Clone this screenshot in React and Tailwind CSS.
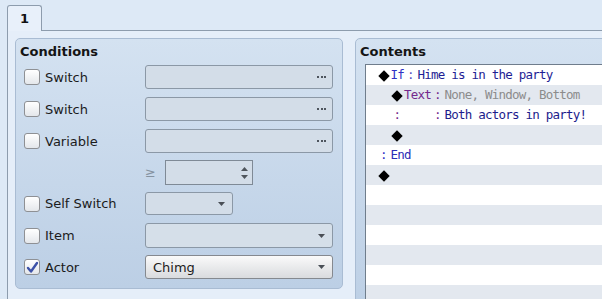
import React from "react";

const sans = { fontFamily: '"DejaVu Sans", Verdana, sans-serif' };
const mono = { fontFamily: '"DejaVu Sans Mono", "Liberation Mono", monospace' };

function Check({ checked }) {
  return (
    <div className="w-4 h-4 rounded-[3px] border border-[#8e9094] bg-gradient-to-b from-[#ffffff] to-[#e4e7eb] flex items-center justify-center shrink-0">
      {checked && (
        <svg width="13" height="13" viewBox="0 0 13 13">
          <path d="M2 7 L5 10.5 L11 2" fill="none" stroke="#3d52a8" strokeWidth="2.4" strokeLinecap="round" strokeLinejoin="round" />
        </svg>
      )}
    </div>
  );
}

function Dots() {
  return (
    <div className="flex gap-[1.5px] mr-[6px]">
      <div className="w-[2px] h-[2px] bg-[#4e555e]" />
      <div className="w-[2px] h-[2px] bg-[#4e555e]" />
      <div className="w-[2px] h-[2px] bg-[#4e555e]" />
    </div>
  );
}

function Arrow() {
  return (
    <svg width="7" height="4" viewBox="0 0 7 4" className="mr-[7px]">
      <polygon points="0,0 7,0 3.5,4" fill="#4a4f56" />
    </svg>
  );
}

function Row({ label, checked, className, children }) {
  return (
    <div className={`flex items-center ${className}`}>
      <div className="w-[129px] pl-[8px] flex items-center gap-[5px]">
        {label && <Check checked={checked} />}
        {label && <span className="text-[13px] text-[#1b1b1b] pt-[1px]">{label}</span>}
      </div>
      {children}
    </div>
  );
}

function Diamond() {
  return (
    <span className="inline-flex w-[13.5px] h-[20px] items-center justify-center">
      <svg width="12" height="12" viewBox="0 0 12 12">
        <polygon points="6,0.3 11.7,6 6,11.7 0.3,6" fill="#000" />
      </svg>
    </span>
  );
}

function FW({ children, className }) {
  return <span className={`inline-block w-[13.5px] text-center tracking-normal ${className}`}>{children}</span>;
}

export default function App() {
  const rows = [
    <>
      <Diamond />
      <span className="text-[#3030c4]">If</span>
      <FW className="text-[#5a4fc0]">:</FW>
      <span className="text-[#1e1e94]">Hime is in the party</span>
    </>,
    <>
      <span className="inline-block w-[13.5px]" />
      <Diamond />
      <span className="text-[#74288c]">Text</span>
      <FW className="text-[#74288c]">:</FW>
      <span className="text-[#8c8c8c]">None, Window, Bottom</span>
    </>,
    <>
      <span className="inline-block w-[13.5px]" />
      <FW className="text-[#74288c]">:</FW>
      <span className="inline-block w-[27px]" />
      <FW className="text-[#74288c]">:</FW>
      <span className="text-[#1c1c8c]">Both actors in party!</span>
    </>,
    <>
      <span className="inline-block w-[13.5px]" />
      <Diamond />
    </>,
    <>
      <FW className="text-[#3030c4]">:</FW>
      <span className="text-[#2d2db6]">End</span>
    </>,
    <>
      <Diamond />
    </>,
    null, null, null, null, null, null,
  ];

  return (
    <div className="w-[602px] h-[299px] overflow-hidden bg-[#dde9f6] flex flex-col" style={sans}>
      <div className="h-[30px] pl-[7px] pt-[5px] flex items-end shrink-0">
        <div className="relative z-10 -mb-px w-[35px] h-[26px] border border-b-0 border-[#8d9cad] rounded-t-[3px] bg-[#e8f0fa] pl-[12px] pt-[3px] text-[13px] font-bold text-[#111]">
          1
        </div>
      </div>
      <div className="flex-1 ml-[7px] border-t border-l border-[#8d9cad] bg-[#e5eef9] flex items-start pl-[7px] pt-[7px] gap-[12px]">
        {/* Conditions */}
        <div className="w-[328px] h-[251px] shrink-0 rounded-[5px] border border-[#a9bcd3] bg-gradient-to-b from-[#d4e2f1] to-[#bccfe5] flex flex-col">
          <div className="h-[26px] pl-[4px] flex items-center text-[13px] font-bold text-[#151515]">Conditions</div>
          <Row label="Switch" className="h-[24px]">
            <div className="w-[188px] h-[24px] rounded-[3px] border border-[#8b98a6] bg-[#d3dde8] flex items-center justify-end">
              <Dots />
            </div>
          </Row>
          <Row label="Switch" className="h-[24px] mt-[8px]">
            <div className="w-[188px] h-[24px] rounded-[3px] border border-[#8b98a6] bg-[#d3dde8] flex items-center justify-end">
              <Dots />
            </div>
          </Row>
          <Row label="Variable" className="h-[24px] mt-[8px]">
            <div className="w-[188px] h-[24px] rounded-[3px] border border-[#8b98a6] bg-[#d3dde8] flex items-center justify-end">
              <Dots />
            </div>
          </Row>
          <Row className="h-[25px] mt-[7px]">
            <span className="w-[20px] text-[13px] text-[#8592a0]">≥</span>
            <div className="w-[88px] h-[25px] border border-[#7f8a96] bg-[#d3dde8] flex flex-col items-end justify-center gap-[4px] pr-[4px]">
              <svg width="7" height="4" viewBox="0 0 7 4">
                <polygon points="0,4 7,4 3.5,0" fill="#4f555c" />
              </svg>
              <svg width="7" height="4" viewBox="0 0 7 4">
                <polygon points="0,0 7,0 3.5,4" fill="#4f555c" />
              </svg>
            </div>
          </Row>
          <Row label="Self Switch" className="h-[23px] mt-[7px]">
            <div className="w-[88px] h-[23px] rounded-[3px] border border-[#8b98a6] bg-[#d3dde8] flex items-center justify-end">
              <Arrow />
            </div>
          </Row>
          <Row label="Item" className="h-[25px] mt-[8px]">
            <div className="w-[188px] h-[25px] rounded-[3px] border border-[#8b98a6] bg-[#d5dfe9] flex items-center justify-end">
              <Arrow />
            </div>
          </Row>
          <Row label="Actor" checked className="h-[24px] mt-[7px]">
            <div className="w-[188px] h-[24px] rounded-[3px] border border-[#85898f] bg-gradient-to-b from-[#fafafa] to-[#d9dbde] flex items-center justify-between pl-[7px]">
              <span className="text-[13px] text-[#1b1b1b] pt-[1px]">Chimg</span>
              <Arrow />
            </div>
          </Row>
        </div>
        {/* Contents */}
        <div className="w-[260px] h-[280px] shrink-0 rounded-[5px] border border-[#a9bcd3] bg-gradient-to-b from-[#d4e2f1] to-[#bccfe5] flex flex-col">
          <div className="h-[25px] pl-[4px] flex items-center text-[13px] font-bold text-[#151515]">Contents</div>
          <div className="ml-[9px] flex-1 border-l border-t border-[#6f7d8c] bg-white flex flex-col text-[12.5px] tracking-[-0.78px]" style={mono}>
            {rows.map((r, i) => (
              <div
                key={i}
                className={`h-[20px] shrink-0 pl-[11px] pt-[1px] flex items-center whitespace-pre ${i % 2 === 1 ? "bg-[#e3e8ef]" : "bg-white"}`}
              >
                {r}
              </div>
            ))}
          </div>
        </div>
      </div>
    </div>
  );
}
